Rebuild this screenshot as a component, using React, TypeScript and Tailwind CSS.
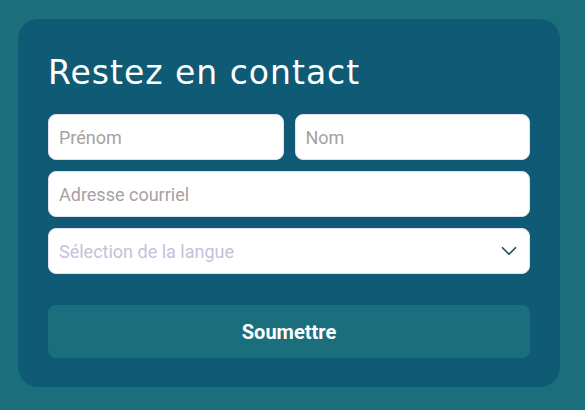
import { ChevronDown } from 'lucide-react';

export default function App() {
  return (
    <div className="min-h-[410px] w-full bg-[#1b6f7c] px-[18px] pt-[19px] pb-[23px]">
      <div className="w-[542px] rounded-[20px] bg-[#0f5a75] px-[30px] pt-[32px] pb-[29px]">
        <h1 className="mb-[19px] font-['DejaVu_Sans',sans-serif] text-[33px] leading-[44px] font-normal tracking-[1px] text-white">
          Restez en contact
        </h1>
        <form className="flex flex-col gap-[11px] font-['Roboto',sans-serif]">
          <div className="grid grid-cols-2 gap-[11px]">
            <input
              type="text"
              placeholder="Prénom"
              className="h-[46px] w-full rounded-[8px] border border-[#e2e0f0] bg-white px-[10px] text-[18px] text-gray-800 outline-none placeholder:text-[#a6a19f]"
            />
            <input
              type="text"
              placeholder="Nom"
              className="h-[46px] w-full rounded-[8px] border border-[#e2e0f0] bg-white px-[10px] text-[18px] text-gray-800 outline-none placeholder:text-[#a6a19f]"
            />
          </div>
          <input
            type="email"
            placeholder="Adresse courriel"
            className="h-[46px] w-full rounded-[8px] border border-[#e2e0f0] bg-white px-[10px] text-[18px] text-gray-800 outline-none placeholder:text-[#a6a19f]"
          />
          <div className="flex h-[46px] w-full items-center justify-between rounded-[8px] border border-[#e2e0f0] bg-white pl-[10px] pr-[7px]">
            <span className="text-[18px] text-[#c3c1dc]">Sélection de la langue</span>
            <ChevronDown className="h-[26px] w-[26px] text-[#1d4f5e]" strokeWidth={1.6} />
          </div>
          <button
            type="button"
            className="mt-[20px] h-[53px] w-full rounded-[8px] bg-[#1b6f7c] text-[20px] font-bold text-white"
          >
            Soumettre
          </button>
        </form>
      </div>
    </div>
  );
}
